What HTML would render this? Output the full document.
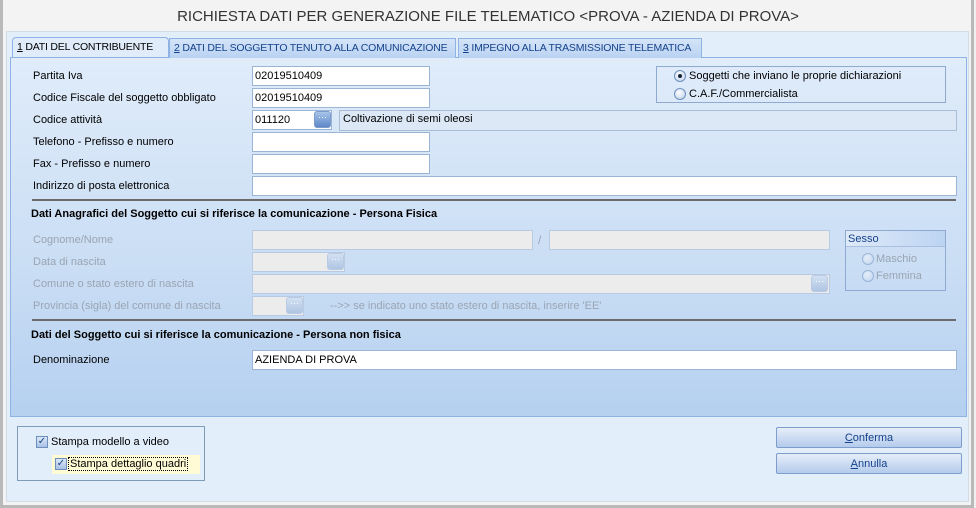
<!DOCTYPE html>
<html><head><meta charset="utf-8"><style>
*{box-sizing:border-box;margin:0;padding:0}
body{width:976px;height:508px;background:#f0f0f0;font-family:"Liberation Sans",sans-serif;font-size:11px;color:#000;position:relative;overflow:hidden}
.a{position:absolute}
.win{left:0;top:0;width:974px;height:508px;border-left:3px solid #b9b9b9;border-right:3px solid #b9b9b9;border-bottom:3px solid #b9b9b9;background:#f3f3f3}
.cont{left:6px;top:31px;width:963px;height:471px;background:#e3eefb;border:1px solid #d3dce6}
.title{left:0;top:8px;width:976px;text-align:center;font-size:15px;color:#333}
.panel{left:10px;top:57px;width:957px;height:360px;border:1px solid #8db2e3;background:linear-gradient(#e0ecfa,#c9ddf4 60%,#b5d0f0)}
.tab{top:38px;height:20px;border:1px solid #8db2e3;border-bottom:none;background:linear-gradient(#d5e5f8,#b9d2f2);padding:3px 4px 0;white-space:nowrap;color:#15428b;font-size:10.5px;letter-spacing:-0.2px;overflow:hidden}
.tab.on{background:#e0ecfa;height:20px;top:37px;color:#000}
.in{background:#fff;border:1px solid #9bb5d6;height:20px;padding:3px 2px 0;white-space:nowrap}
.dis{background:#ececec;border:1px solid #b8cbe3;height:20px}
.lb{left:33px}
.gl{color:#9aa5b3}
.btn{width:17px;height:17px;border:1px solid #7d9ccc;border-radius:3px;background:linear-gradient(#a8c4ea,#5d87c8);color:#fff;font-size:9px;text-align:center;line-height:11px}
.btn.d{background:linear-gradient(#d3e0f1,#aec5e3);border-color:#b9cbe4}
.sep{left:32px;width:924px;height:2px;background:#6a6a6a}
.b{font-weight:bold}
.rad{width:12px;height:12px;border-radius:50%;border:1px solid #6d8fbe;background:radial-gradient(circle at 40% 35%,#fff,#b9cdea)}
.cb{width:12px;height:12px;border:1px solid #6d8fbe;background:linear-gradient(#dde8f7,#a9c1e4);font-size:10px;line-height:10px;text-align:center;color:#15428b}
.pb{width:186px;height:21px;border:1px solid #7e9dcc;border-radius:2px;background:linear-gradient(#e6eef9,#b4cbec);text-align:center;padding-top:4px;color:#15428b}
</style></head><body>
<div class="a win"></div>
<div class="a cont"></div>
<div class="a title">RICHIESTA DATI PER GENERAZIONE FILE TELEMATICO &lt;PROVA - AZIENDA DI PROVA&gt;</div>
<div class="a panel"></div>
<div class="a tab on" style="left:12px;width:157px;border-radius:4px 4px 0 0"><u>1</u> DATI DEL CONTRIBUENTE</div>
<div class="a tab" style="left:169px;width:287px"><u>2</u> DATI DEL SOGGETTO TENUTO ALLA COMUNICAZIONE</div>
<div class="a tab" style="left:458px;width:244px"><u>3</u> IMPEGNO ALLA TRASMISSIONE TELEMATICA</div>

<div class="a lb" style="top:70px">Partita Iva</div>
<div class="a in" style="left:252px;top:66px;width:178px">02019510409</div>
<div class="a lb" style="top:92px">Codice Fiscale del soggetto obbligato</div>
<div class="a in" style="left:252px;top:88px;width:178px">02019510409</div>
<div class="a lb" style="top:114px">Codice attività</div>
<div class="a in" style="left:252px;top:110px;width:80px">011120</div>
<div class="a btn" style="left:314px;top:111px">···</div>
<div class="a" style="left:339px;top:110px;width:618px;height:21px;border:1px solid #a9bdd6;background:#dce8f6;padding:2px 3px">Coltivazione di semi oleosi</div>
<div class="a lb" style="top:136px">Telefono - Prefisso e numero</div>
<div class="a in" style="left:252px;top:132px;width:178px"></div>
<div class="a lb" style="top:158px">Fax - Prefisso e numero</div>
<div class="a in" style="left:252px;top:154px;width:178px"></div>
<div class="a lb" style="top:180px">Indirizzo di posta elettronica</div>
<div class="a in" style="left:252px;top:176px;width:705px"></div>

<div class="a" style="left:656px;top:66px;width:290px;height:37px;border:1px solid #8eaad0"></div>
<div class="a rad" style="left:674px;top:70px"><div style="width:4px;height:4px;background:#123;border-radius:50%;margin:3px"></div></div>
<div class="a" style="left:689px;top:70px">Soggetti che inviano le proprie dichiarazioni</div>
<div class="a rad" style="left:674px;top:88px"></div>
<div class="a" style="left:689px;top:88px">C.A.F./Commercialista</div>

<div class="a sep" style="top:199px"></div>
<div class="a b" style="left:31px;top:208px">Dati Anagrafici del Soggetto cui si riferisce la comunicazione - Persona Fisica</div>
<div class="a lb gl" style="top:234px">Cognome/Nome</div>
<div class="a dis" style="left:252px;top:230px;width:281px"></div>
<div class="a gl" style="left:538px;top:233px;font-size:12px">/</div>
<div class="a dis" style="left:549px;top:230px;width:281px"></div>
<div class="a lb gl" style="top:256px">Data di nascita</div>
<div class="a dis" style="left:252px;top:252px;width:93px"></div>
<div class="a btn d" style="left:327px;top:253px">···</div>
<div class="a lb gl" style="top:278px">Comune o stato estero di nascita</div>
<div class="a dis" style="left:252px;top:274px;width:578px"></div>
<div class="a btn d" style="left:811px;top:275px">···</div>
<div class="a lb gl" style="top:300px">Provincia (sigla) del comune di nascita</div>
<div class="a dis" style="left:252px;top:296px;width:52px"></div>
<div class="a btn d" style="left:286px;top:297px">···</div>
<div class="a gl" style="left:330px;top:300px">--&gt;&gt; se indicato uno stato estero di nascita, inserire 'EE'</div>

<div class="a" style="left:845px;top:230px;width:101px;height:61px;border:1px solid #8eaad0"></div>
<div class="a" style="left:846px;top:231px;width:99px;height:16px;border-bottom:1px solid #a9c0e0;background:linear-gradient(90deg,#dfeaf8,#bcd4f2);padding:2px 2px;color:#15428b">Sesso</div>
<div class="a rad" style="left:862px;top:253px;opacity:.5"></div>
<div class="a gl" style="left:876px;top:253px">Maschio</div>
<div class="a rad" style="left:862px;top:270px;opacity:.5"></div>
<div class="a gl" style="left:876px;top:270px">Femmina</div>

<div class="a sep" style="top:319px"></div>
<div class="a b" style="left:31px;top:329px">Dati del Soggetto cui si riferisce la comunicazione - Persona non fisica</div>
<div class="a lb" style="top:354px">Denominazione</div>
<div class="a in" style="left:252px;top:350px;width:705px">AZIENDA DI PROVA</div>

<div class="a" style="left:17px;top:426px;width:188px;height:55px;border:1px solid #7f9db9"></div>
<div class="a cb" style="left:36px;top:436px">✓</div>
<div class="a" style="left:51px;top:436px">Stampa modello a video</div>
<div class="a" style="left:52px;top:455px;width:148px;height:19px;background:#fffbd5"></div>
<div class="a cb" style="left:55px;top:458px">✓</div>
<div class="a" style="left:68px;top:457px;border:1px dotted #000;padding:0 1px">Stampa dettaglio quadri</div>
<div class="a pb" style="left:776px;top:427px"><u>C</u>onferma</div>
<div class="a pb" style="left:776px;top:453px"><u>A</u>nnulla</div>
</body></html>
